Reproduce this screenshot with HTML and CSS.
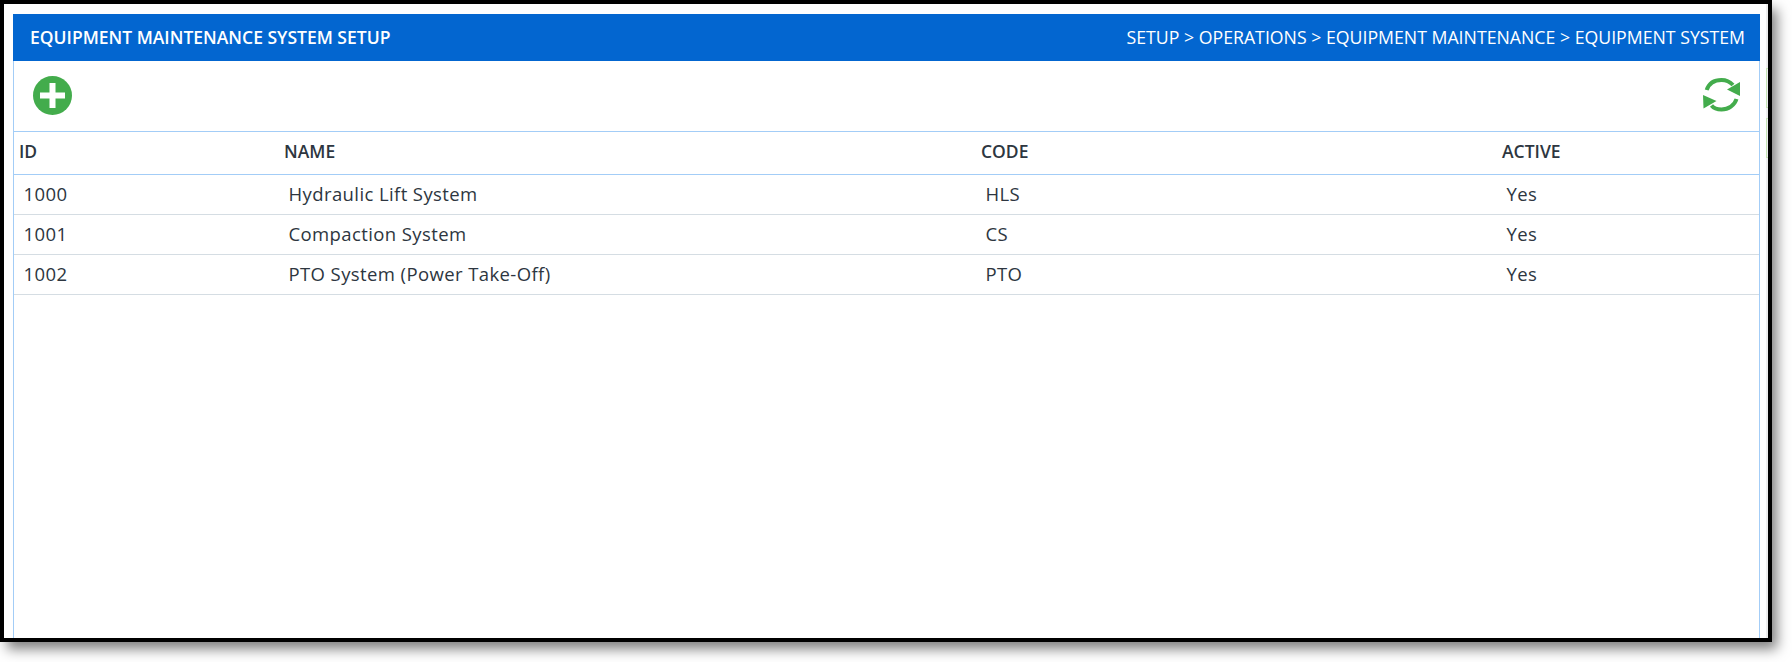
FILE: index.html
```html
<!DOCTYPE html>
<html lang="en">
<head>
    <meta charset="UTF-8">
    <title>Equipment Maintenance System Setup</title>
    <link rel="stylesheet" href="styles.css">
</head>
<body>
    <div class="window">
        <div class="panel">
            <div class="title-bar">
                <span class="title">EQUIPMENT MAINTENANCE SYSTEM SETUP</span>
                <span class="crumbs">SETUP &gt; OPERATIONS &gt; EQUIPMENT MAINTENANCE &gt; EQUIPMENT SYSTEM</span>
            </div>

            <div class="toolbar">
                <svg class="icon-add" viewBox="0 0 39 39">
                    <circle cx="19.5" cy="19.5" r="19.5" fill="#43ac4c"/>
                    <path d="M7 16.500h9.500V7h6v9.500H32v6h-9.500V32h-6v-9.500H7z" fill="#fff"/>
                </svg>
                <svg class="icon-refresh" viewBox="0 0 37 35">
                    <path d="M3.700 12C6 5 11.500 2 18.500 2c5 0 8.500 1.800 11.500 5" fill="none" stroke="#43ac4c" stroke-width="4"/>
                    <path d="M24 11.500L37 18V4z" fill="#43ac4c"/>
                    <path d="M33.500 21c-2 6.500-8 10.500-15 10.500-4.500 0-8-1.500-10-4" fill="none" stroke="#43ac4c" stroke-width="4"/>
                    <path d="M0 17l13.500 6L.500 30.500z" fill="#43ac4c"/>
                </svg>
            </div>

            <table class="grid">
                <colgroup>
                    <col class="col-id">
                    <col class="col-name">
                    <col class="col-code">
                    <col class="col-active">
                </colgroup>
                <thead>
                    <tr>
                        <th>ID</th>
                        <th>NAME</th>
                        <th>CODE</th>
                        <th>ACTIVE</th>
                    </tr>
                </thead>
                <tbody>
                    <tr>
                        <td>1000</td>
                        <td>Hydraulic Lift System</td>
                        <td>HLS</td>
                        <td>Yes</td>
                    </tr>
                    <tr>
                        <td>1001</td>
                        <td>Compaction System</td>
                        <td>CS</td>
                        <td>Yes</td>
                    </tr>
                    <tr>
                        <td>1002</td>
                        <td>PTO System (Power Take-Off)</td>
                        <td>PTO</td>
                        <td>Yes</td>
                    </tr>
                </tbody>
            </table>
        </div>

        <div class="side-strip">
            <div class="side-tab"></div>
            <div class="side-tab"></div>
        </div>
    </div>
</body>
</html>
```

FILE: styles.css
```css
* {
    margin: 0;
    padding: 0;
    box-sizing: border-box;
    font-family: 'Open Sans', sans-serif;
}

html, body {
    height: 100%;
    background: #fff;
    overflow: hidden;
}

.window {
    width: 1772px;
    height: 642px;
    border: 4px solid #000;
    background: #fff;
    padding: 10px 0 0 9px;
    display: flex;
    gap: 6px;
    box-shadow: 6px 8px 12px -1px rgba(0, 0, 0, 0.5);
}

.panel {
    width: 1747px;
    height: 100%;
    border-left: 1px solid #a3cdf7;
    border-right: 1px solid #a3cdf7;
}

.title-bar {
    height: 47px;
    margin: 0 -1px;
    padding: 0 15px 2px 17px;
    display: flex;
    align-items: center;
    justify-content: space-between;
    background: #0366d0;
    color: #fff;
}

.title {
    font-size: 17.500px;
    font-weight: 600;
}

.crumbs {
    font-size: 17.720px;
}

.toolbar {
    height: 71px;
    padding: 15px 19px 0 19px;
    display: flex;
    justify-content: space-between;
    align-items: flex-start;
    border-bottom: 1px solid #a3cdf7;
}

.icon-add {
    width: 39px;
    height: 39px;
}

.icon-refresh {
    width: 37px;
    height: 35px;
    margin-top: 2px;
}

.grid {
    width: 100%;
    table-layout: fixed;
    border-collapse: collapse;
    color: #2d3640;
}

.col-id { width: 265px; }
.col-name { width: 697px; }
.col-code { width: 521px; }

.grid th {
    height: 42px;
    padding: 0 0 4px 5px;
    text-align: left;
    font-size: 17.500px;
    font-weight: 600;
    border-bottom: 1px solid #a3cdf7;
}

.grid td {
    height: 40px;
    padding: 0 0 1px 9.500px;
    font-size: 18.500px;
    letter-spacing: 0.400px;
    border-bottom: 1px solid #d5dde3;
}

/* sliver of the next panel showing at the right edge */
.side-strip {
    width: 2px;
    margin-top: -10px;
    padding-top: 64px;
    background: #ededed;
}

.side-tab {
    height: 40px;
    margin-bottom: 10px;
    border: 1px solid #c5e3b4;
    border-right: none;
}
```
